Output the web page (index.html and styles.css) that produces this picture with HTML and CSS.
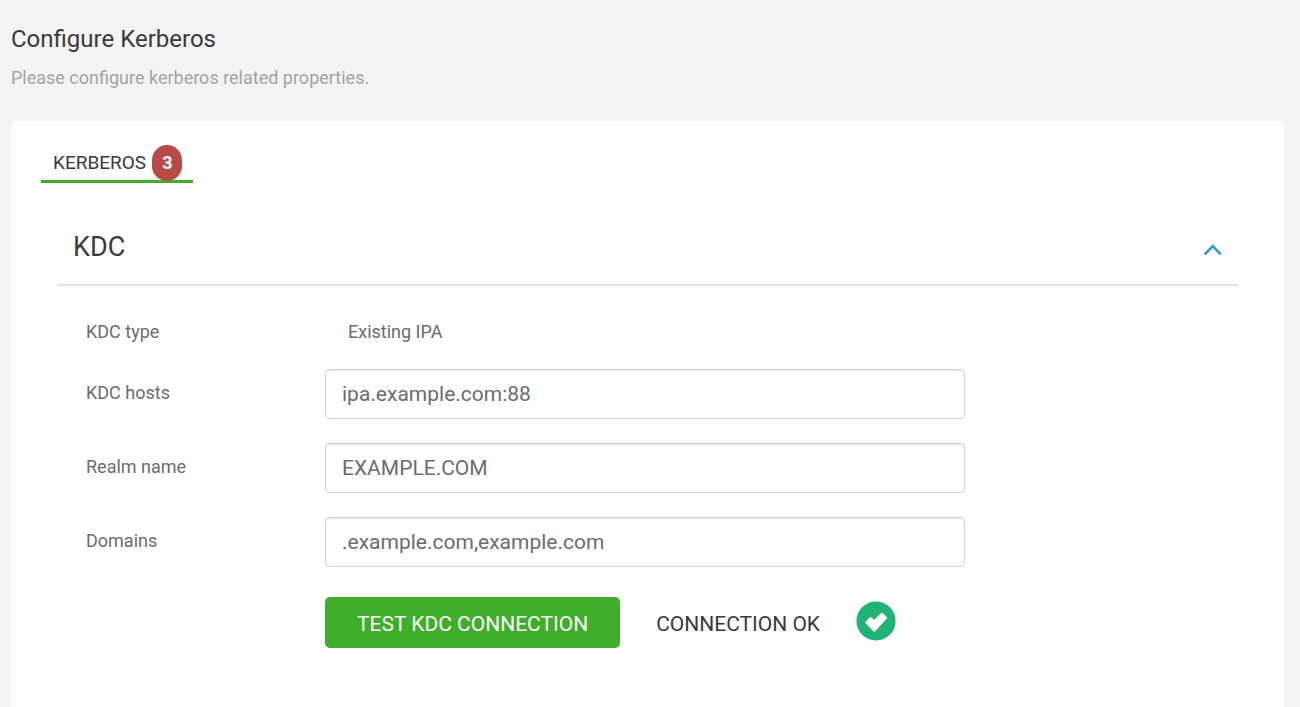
FILE: index.html
```html
<!DOCTYPE html>
<html lang="en">
<head>
<meta charset="utf-8">
<meta name="viewport" content="width=device-width, initial-scale=1">
<title>Configure Kerberos</title>
<link rel="stylesheet" href="styles.css">
</head>
<body>
<main class="page">
  <header class="page-header">
    <h1 class="page-title">Configure Kerberos</h1>
    <p class="page-subtitle">Please configure kerberos related properties.</p>
  </header>
  <div class="card">
    <nav class="tabs">
      <a class="tab" href="#kerberos">KERBEROS <span class="badge">3</span></a>
    </nav>
    <section class="section" id="kerberos">
      <div class="section-header">
        <h2 class="section-title">KDC</h2>
        <button class="collapse" type="button" aria-label="Collapse KDC" aria-expanded="true">
          <svg width="20" height="14" viewBox="0 0 20 14" fill="none" stroke="#2b9dca" stroke-width="2.6"><path d="M1.8 11.4 9.8 3.2l8 8.2"/></svg>
        </button>
      </div>
      <form class="form">
        <div class="row row-static">
          <span class="label">KDC type</span>
          <span class="value">Existing IPA</span>
        </div>
        <div class="row">
          <label class="label" for="hosts">KDC hosts</label>
          <input class="input" id="hosts" type="text" value="ipa.example.com:88">
        </div>
        <div class="row">
          <label class="label" for="realm">Realm name</label>
          <input class="input" id="realm" type="text" value="EXAMPLE.COM">
        </div>
        <div class="row">
          <label class="label" for="domains">Domains</label>
          <input class="input" id="domains" type="text" value=".example.com,example.com">
        </div>
        <div class="actions">
          <button class="test-button" type="button">TEST KDC CONNECTION</button>
          <span class="status">CONNECTION OK</span>
          <svg class="status-icon" width="40" height="40" viewBox="0 0 40 40"><circle cx="20" cy="20" r="19.6" fill="#1fb474"/><path d="M13.8 16.3a1 1 0 0 1 1.4 0l2.9 2.8 7.1-7.1a1 1 0 0 1 1.4 0l4.2 4.1a1 1 0 0 1 0 1.4L19 30.4a1 1 0 0 1-1.4 0L9.5 22.2a1 1 0 0 1 0-1.4z" fill="#fff"/></svg>
        </div>
      </form>
    </section>
  </div>
</main>
</body>
</html>
```
FILE: styles.css
```css
* {
  box-sizing: border-box;
}

body {
  margin: 0;
  background: #f3f3f3;
  color: #3a3a3a;
  font-family: Roboto, "Liberation Sans", sans-serif;
  font-size: 18px;
  line-height: 24px;
}

.page {
  display: flex;
  flex-direction: column;
  min-height: 100vh;
  padding: 24px 16px 0 11px;
}

.page-title {
  margin: 0;
  font-size: 24px;
  font-weight: 400;
  line-height: 30px;
}

.page-subtitle {
  margin: 12px 0 31px;
  color: #a3a3a3;
}

.card {
  flex: 1;
  padding: 24px 46px 40px;
  border-radius: 5px 5px 0 0;
  background: #fff;
}

.tabs {
  display: flex;
  margin-left: -16px;
}

.tab {
  display: flex;
  align-items: center;
  gap: 6px;
  height: 38px;
  padding: 0 11px 0 12px;
  border-bottom: 3px solid #3fae2a;
  color: #3a3a3a;
  font-size: 19px;
  text-decoration: none;
}

.badge {
  height: 36px;
  padding: 0 10px;
  border-radius: 16px;
  background: #b94a48;
  color: #fff;
  font-size: 18px;
  font-weight: 700;
  line-height: 36px;
}

.section-header {
  display: flex;
  align-items: center;
  justify-content: space-between;
  height: 77px;
  margin-top: 26px;
  padding: 0 15px 0 16px;
  border-bottom: 2px solid #e3e3e3;
}

.section-title {
  margin: 0;
  font-size: 27px;
  font-weight: 400;
  line-height: 36px;
}

.collapse {
  display: flex;
  padding: 6px 0 0;
  border: 0;
  background: none;
}

.form {
  display: flex;
  flex-direction: column;
  gap: 24px;
  padding: 33px 0 0 29px;
}

.row {
  display: grid;
  grid-template-columns: 239px minmax(0, 640px);
  align-items: center;
  color: #6c6c6c;
}

.row-static {
  height: 26px;
}

.label {
  padding-bottom: 3px;
}

.row-static .label {
  padding-bottom: 0;
}

.value {
  padding-left: 23px;
}

.input {
  width: 100%;
  height: 50px;
  padding: 0 16px;
  border: 1px solid #cfd3d7;
  border-radius: 4px;
  background: #fff;
  box-shadow: inset 0 1px 2px rgba(0, 0, 0, 0.1);
  color: #6c6c6c;
  font: inherit;
  font-size: 21px;
}

.actions {
  display: flex;
  align-items: center;
  margin: 6px 0 0 239px;
  font-size: 21px;
}

.test-button {
  height: 51px;
  padding: 3px 32px 0;
  border: 0;
  border-radius: 5px;
  background: #3fae2a;
  color: #fff;
  font: inherit;
}

.status {
  margin: 0 36px;
  padding-top: 3px;
}

.status-icon {
  margin-bottom: 4px;
}
```
